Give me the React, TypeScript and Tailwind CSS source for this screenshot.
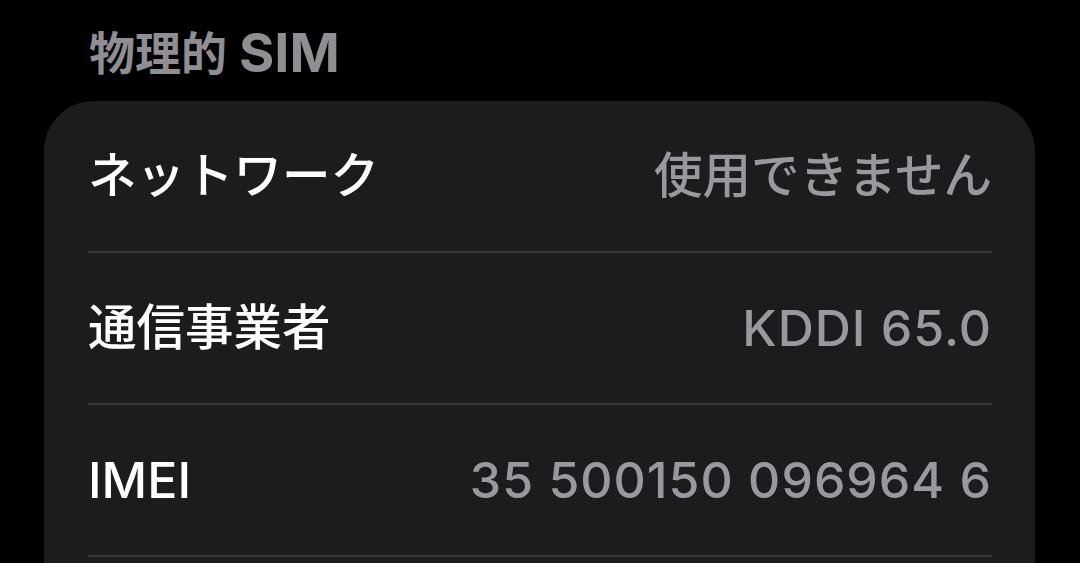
const rows = [
  { label: "ネットワーク", value: "使用できません", cjkLabel: true, cjkValue: true },
  { label: "通信事業者", value: "KDDI 65.0", cjkLabel: true, cjkValue: false },
  { label: "IMEI", value: "35 500150 096964 6", cjkLabel: false, cjkValue: false },
]

const jp = "font-['Inter','Noto_Sans_CJK_JP',sans-serif]"

export default function App() {
  return (
    <div className={`h-[563px] w-[1080px] overflow-hidden bg-black ${jp}`}>
      {/* セクション見出し */}
      <div className="flex h-[101px] items-center pl-[89px] pt-[4px] font-bold text-[#8e8e93]">
        <span className="text-[46px] leading-none">物理的</span>
        <span className="ml-[12px] text-[54px] leading-none">SIM</span>
      </div>

      {/* 情報カード */}
      <div className="ml-[44px] w-[991px] rounded-[50px] bg-[#1c1c1e] pl-[44px] pr-[43px] pb-[60px]">
        {rows.map((row) => (
          <div key={row.label} className="border-b-2 border-[#3a3a3c]">
            <div className="flex h-[150px] items-center justify-between font-medium">
              <span
                className={
                  row.cjkLabel
                    ? "text-[48.5px] leading-none text-white"
                    : "text-[50px] leading-none text-white"
                }
              >
                {row.label}
              </span>
              <span
                className={
                  row.cjkValue
                    ? "text-[48.5px] leading-none text-[#98989f]"
                    : "text-[50px] leading-none tracking-[1px] text-[#98989f]"
                }
              >
                {row.value}
              </span>
            </div>
          </div>
        ))}
      </div>
    </div>
  )
}
